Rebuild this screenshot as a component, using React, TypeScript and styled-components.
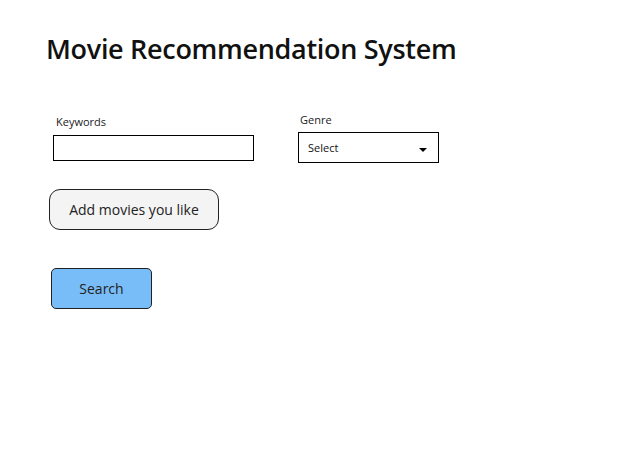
import React from 'react'
import styled, { createGlobalStyle } from 'styled-components'

const GlobalStyle = createGlobalStyle`
    html, body {
        margin: 0;
        padding: 0;
        background: #ffffff;
        font-family: "Open Sans", "Noto Sans", sans-serif;
        color: #111;
    }
`

const Page = styled.div`
    width: 643px;
    height: 456px;
    padding: 30px 0 0 46px;
    box-sizing: border-box;
`

const Title = styled.h1`
    margin: 0;
    font-size: 27px;
    font-weight: 600;
    letter-spacing: -0.3px;
    line-height: 38px;
    color: #111;
`

const FieldRow = styled.div`
    display: flex;
    align-items: flex-start;
    margin-top: 45px;
`

const Field = styled.div<{ offsetX: number; offsetY: number; gap: number }>`
    display: flex;
    flex-direction: column;
    gap: ${props => props.gap}px;
    margin-left: ${props => props.offsetX}px;
    margin-top: ${props => props.offsetY}px;
`

const Label = styled.label<{ indent?: number }>`
    font-size: 11px;
    line-height: 14px;
    color: #222;
    padding-left: ${props => props.indent ?? 0}px;
`

const TextBox = styled.input`
    width: 201px;
    height: 26px;
    box-sizing: border-box;
    border: 1px solid #000;
    border-radius: 0;
    padding: 0 6px;
    font-family: inherit;
    outline: none;
`

const SelectBox = styled.div`
    width: 141px;
    height: 31px;
    box-sizing: border-box;
    border: 1px solid #000;
    display: flex;
    align-items: center;
    justify-content: space-between;
    padding: 0 11px 0 9px;
    font-size: 11px;
    color: #111;
`

const Caret = styled.span`
    width: 0;
    height: 0;
    border-left: 4.5px solid transparent;
    border-right: 4.5px solid transparent;
    border-top: 4px solid #000;
    margin-top: 5px;
`

const Button = styled.button<{ variant: 'plain' | 'primary' }>`
    display: block;
    box-sizing: border-box;
    font-family: inherit;
    font-size: 14px;
    color: #222;
    border: 1px solid #222;
    cursor: pointer;
    width: ${props => (props.variant === 'primary' ? '101px' : '170px')};
    height: 41px;
    border-radius: ${props => (props.variant === 'primary' ? '5px' : '11px')};
    background: ${props => (props.variant === 'primary' ? '#78bdf8' : '#f4f4f4')};
    margin-left: ${props => (props.variant === 'primary' ? '5px' : '3px')};
    margin-top: ${props => (props.variant === 'primary' ? '38px' : '26px')};
`

const App: React.FunctionComponent = () => {
    return (
        <Page>
            <GlobalStyle />
            <Title>Movie Recommendation System</Title>
            <FieldRow>
                <Field offsetX={7} offsetY={2} gap={6}>
                    <Label indent={3}>Keywords</Label>
                    <TextBox />
                </Field>
                <Field offsetX={44} offsetY={0} gap={5}>
                    <Label indent={2}>Genre</Label>
                    <SelectBox>
                        Select
                        <Caret />
                    </SelectBox>
                </Field>
            </FieldRow>
            <Button variant="plain">Add movies you like</Button>
            <Button variant="primary">Search</Button>
        </Page>
    )
}

export default App
